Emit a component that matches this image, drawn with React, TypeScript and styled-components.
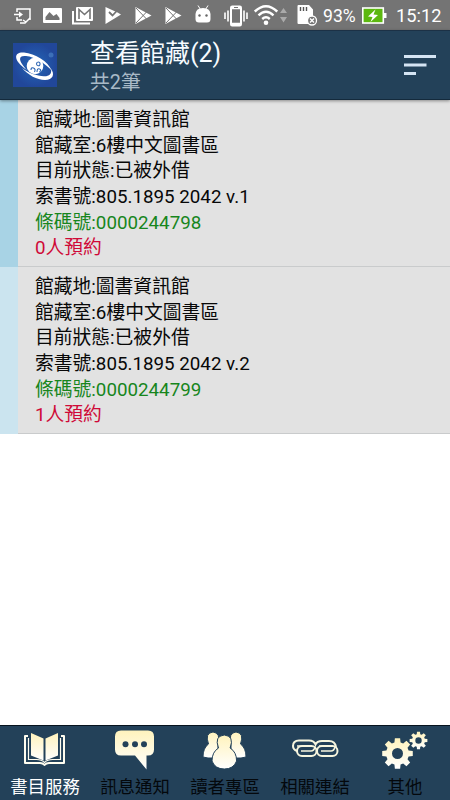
import React from "react";
import styled, { createGlobalStyle } from "styled-components";

const Global = createGlobalStyle`
  * { box-sizing: border-box; }
  body { margin: 0; background: #fff; font-family: Roboto, "Noto Sans CJK TC", sans-serif; }
  svg { display: block; flex: none; }
`;

const Screen = styled.div`
  width: 450px;
  height: 800px;
  display: flex;
  flex-direction: column;
  overflow: hidden;
  background: #fff;
`;

const StatusBar = styled.div`
  height: 30px;
  flex: none;
  display: flex;
  align-items: center;
  background: #747474;
  color: #fff;
  white-space: nowrap;
`;

const Glyph = styled.svg<{ $gap: number }>`
  margin-left: ${(p) => p.$gap}px;
  height: 30px;
`;

const StatusText = styled.span<{ $gap: number; $size: number; $width: number }>`
  margin-left: ${(p) => p.$gap}px;
  width: ${(p) => p.$width}px;
  font-size: ${(p) => p.$size}px;
  line-height: 30px;
  padding-top: 1px;
  height: 30px;
  font-weight: 400;
`;

const Header = styled.header`
  height: 70px;
  flex: none;
  display: flex;
  align-items: center;
  padding: 0 14px 0 13px;
  background: #234159;
  border-top: 1px solid #1c3146;
  border-bottom: 1px solid #142a3c;
  box-shadow: 0 1px 3px rgba(0, 0, 0, 0.4);
  z-index: 1;
`;

const Titles = styled.div`
  flex: 1;
  margin-left: 33px;
  padding-top: 5px;
`;

const Title = styled.h1`
  margin: 0;
  font-size: 25px;
  font-weight: 400;
  line-height: 31px;
  color: #f6fbff;
`;

const Subtitle = styled.div`
  font-size: 19.8px;
  line-height: 28px;
  color: #a9bac7;
`;

const List = styled.main`
  flex: 1;
`;

const Card = styled.article<{ $stripe: string }>`
  height: 167px;
  padding: 8px 0 0 17px;
  border-left: 18.5px solid ${(p) => p.$stripe};
  background: #e2e2e2;
  box-shadow: inset 0 -1px 0 #c9cbcc;
`;

const Line = styled.div<{ $color?: string }>`
  height: 25.7px;
  line-height: 25.7px;
  font-size: 18.78px;
  white-space: nowrap;
  color: ${(p) => p.$color ?? "#080808"};
`;

const TabBar = styled.nav`
  height: 75px;
  flex: none;
  display: grid;
  grid-template-columns: repeat(5, 1fr);
  background: #234159;
  border-top: 1px solid #07131e;
`;

const Tab = styled.div<{ $active?: boolean }>`
  display: flex;
  flex-direction: column;
  align-items: center;
  color: ${(p) => (p.$active ? "#fff" : "#04080c")};
  font-size: 17.4px;
  line-height: 24px;
  white-space: nowrap;
`;

const TabIcon = styled.svg`
  width: 90px;
  height: 49px;
`;

function PlayStore({ gap }: { gap: number }) {
  return (
    <Glyph $gap={gap} width="17" viewBox="0 0 17 30">
      <path d="M.5 7v17L16.5 15.5Z" fill="#fff" />
      <path d="M1 8l10.500 11M1 23l10.500-11" stroke="#747474" strokeWidth="1" />
    </Glyph>
  );
}

function StatusIcons() {
  return (
    <>
      <Glyph $gap={14} width="17" viewBox="0 0 17 30" fill="none" stroke="#fff" strokeWidth="1.500">
        <path d="M3 12V9h13v11M3 17v3h5M0 14.500h6" />
        <path d="M5 11.500l4 3-4 3Z" fill="#fff" stroke="none" />
        <path d="M6 23h5l5-5M9 20l3 2" />
      </Glyph>
      <Glyph $gap={12} width="19" viewBox="0 0 19 30">
        <rect y="8" width="19" height="15" rx="1" fill="#fff" />
        <path d="M2.500 20v-3l4-5 4 4 3-2 3 4v2Z" fill="#747474" />
      </Glyph>
      <Glyph $gap={10} width="21" viewBox="0 0 21 30" fill="none">
        <path d="M1 11v12.500h17" stroke="#fff" strokeWidth="2" />
        <rect x="4" y="7" width="17" height="14" rx="1" fill="#fff" />
        <path d="M7 19V9.500l5.500 5 5.500-5V19" stroke="#747474" strokeWidth="1.600" />
      </Glyph>
      <Glyph $gap={12} width="16" viewBox="0 0 16 30">
        <path d="M.5 7v17L16 14.500l-3.500-2Z" fill="#fff" />
        <path d="M4 12l3.500 3.500L14 8.500" fill="none" stroke="#747474" strokeWidth="1.800" />
      </Glyph>
      <PlayStore gap={14} />
      <PlayStore gap={13} />
      <Glyph $gap={13} width="16" viewBox="0 0 16 30">
        <path d="M3 5.500l2.500 4M13 5.500l-2.500 4" stroke="#fff" strokeWidth="1" />
        <path d="M.5 14Q1 8 8 8t7.500 6v5q0 3.500-3.500 3.500H4Q.5 22.500.5 19Z" fill="#fff" />
        <circle cx="4.500" cy="15.500" r="1.200" fill="#666" />
        <circle cx="11.500" cy="15.500" r="1.200" fill="#666" />
      </Glyph>
      <Glyph $gap={13} width="24" viewBox="0 0 24 30" fill="none" stroke="#fff">
        <rect x="7" y="6.500" width="10" height="19" rx="1.200" strokeWidth="2" />
        <path d="M7 8h10M7 24h10" strokeWidth="2.500" />
        <path d="M1 12.500v6.500M4 10.500v11M20 10.500v11M23 12.500v6.500" strokeWidth="1.600" />
        <path d="M10 7.500h4" stroke="#747474" />
      </Glyph>
      <Glyph $gap={6} width="24" viewBox="0 0 24 30" fill="none" stroke="#fff" strokeWidth="2.400">
        <path d="M.8 11.500Q12 1 23.200 11.500M4.500 15.300q7.500-7 15 0M8.200 19q3.800-3.400 7.600 0" />
        <circle cx="12" cy="22.800" r="2.300" fill="#fff" stroke="none" />
      </Glyph>
      <Glyph $gap={2} width="7" viewBox="0 0 7 30" fill="#aaa">
        <path d="M0 13l3.500-5L7 13ZM0 17h7l-3.500 5.500Z" />
      </Glyph>
      <Glyph $gap={10} width="21" viewBox="0 0 21 30">
        <path d="M.5 6Q.5 5 1.500 5H12l4 4.500V16q-5 1-5 5l1 3H1.500q-1 0-1-1Z" fill="#fff" />
        <path d="M3.500 7v4M6.500 7v4M9.500 7v4" stroke="#555" strokeWidth="1.400" />
        <circle cx="15" cy="20.500" r="4.500" fill="#747474" stroke="#fff" strokeWidth="1.300" />
        <path d="M13 18.500l4 4m0-4l-4 4" stroke="#fff" strokeWidth="1.400" />
      </Glyph>
      <StatusText $gap={5} $size={17.6} $width={34}>93%</StatusText>
      <Glyph $gap={5} width="25" viewBox="0 0 25 30">
        <rect x=".8" y="8" width="20.500" height="15" fill="#5cb810" stroke="#fff" strokeWidth="1.600" />
        <rect x="22" y="13" width="2.500" height="5" fill="#fff" />
        <path d="M13.500 9.500L6 16.500l4.500.5-2 5 7.500-7-4.500-.5Z" fill="#fff" />
      </Glyph>
      <StatusText $gap={9} $size={18.3} $width={46}>15:12</StatusText>
    </>
  );
}

function Logo() {
  return (
    <svg width="44" height="44" viewBox="0 0 44 44">
      <defs>
        <radialGradient id="logoFill">
          <stop offset="0" stopColor="#2467b8" />
          <stop offset="1" stopColor="#21479a" />
        </radialGradient>
      </defs>
      <rect width="44" height="44" fill="url(#logoFill)" />
      <circle cx="38" cy="12" r="2.500" fill="#3c6fb8" />
      <circle cx="22" cy="23" r="8.300" fill="#fff" />
      <path d="M14 27C-1 17 1 8.500 11 9.500C22 10.500 35 18 39 28C32 20 22 14 13 13C4 12 6 19 14 27Z" fill="#fff" />
      <path d="M9 25C15 32 24 37 32 37C40 37 42 31 38 26C39 31 36 33.500 31 33.300C24 33 15 30 9 25Z" fill="#fff" />
      <path d="M18 27q0-3 2.500-2t1 4M24 29q0-4 2.500-3t0 3M23.500 21q0-2 1.800-2t1.700 2-1.700 1.800-1.800-1.800" fill="none" stroke="#2862b2" strokeWidth="1.100" />
    </svg>
  );
}

function gear(cx: number, cy: number, outer: number, inner: number, hole: number) {
  const points: string[] = [];
  for (let i = 0; i < 8; i++) {
    const mid = (i * Math.PI) / 4;
    [[-0.27, inner], [-0.17, outer], [0.17, outer], [0.27, inner]].forEach(([da, r]) => {
      points.push(`${(cx + r * Math.cos(mid + da)).toFixed(2)} ${(cy + r * Math.sin(mid + da)).toFixed(2)}`);
    });
  }
  return `M${points.join("L")}ZM${cx - hole} ${cy}a${hole} ${hole} 0 1 0 ${hole * 2} 0a${hole} ${hole} 0 1 0 ${-hole * 2} 0Z`;
}

const cream = "url(#cream)";

const tabs = [
  {
    label: "書目服務",
    icon: (
      <>
        <path d="M28 10h-3v27h15q3 0 4.500 2 1.500-2 4.500-2h15V10h-3" fill="none" stroke="#fffdf0" strokeWidth="2" strokeLinejoin="round" />
        <path d="M28.500 12v21.500h8q5 0 8 3 3-3 8-3h8V12" fill="none" stroke="#fffdf0" strokeWidth="1.200" />
        <path d="M31 7l12.500 5.500V34.500L31 29.500ZM58 7L45.500 12.500V34.500L58 29.500Z" fill={cream} />
      </>
    ),
  },
  {
    label: "訊息通知",
    icon: (
      <>
        <path d="M31 4.500h27q6 0 6 6v13q0 6-6 6h-1.500v14L45 29.500H31q-6 0-6-6V10.500q0-6 6-6Z" fill={cream} />
        <g fill="#234159"><circle cx="35.500" cy="18.300" r="3" /><circle cx="45" cy="18.300" r="3" /><circle cx="54" cy="18.300" r="3" /></g>
      </>
    ),
  },
  {
    label: "讀者專區",
    icon: (
      <g fill={cream} stroke="#234159" strokeWidth="1">
        <path d="M28.500 18q-4-11 4.500-12 8 1 5 12v14H28l-5-1q0-9 5.500-13ZM60.500 18q4-11-4.500-12-8 1-5 12v14h10l5-1q0-9-5.500-13Z" />
        <path d="M38.500 22q-4.500-12 5.800-13 10.300 1 5.800 13 6.500 4 6.500 13-3 8-12.300 8T32 35q0-9 6.500-13Z" />
      </g>
    ),
  },
  {
    label: "相關連結",
    icon: (
      <g fill="none" stroke="#f7f6df" strokeWidth="2">
        <path d="M27 25q-4-1.500-4-5 0-5.500 6-5.500h10q5 0 6.500 4Q47 15 52 15h7q6 0 7 6" />
        <rect x="27" y="20" width="19.500" height="10" rx="5" />
        <rect x="47" y="20" width="20.500" height="10" rx="5" />
        <path d="M31 25h10q3 0 4-4M51 25h10q3 0 4-4" strokeWidth="1.500" />
        <path d="M27 20h13M49 20h12" strokeWidth="1.500" />
      </g>
    ),
  },
  {
    label: "其他",
    icon: (
      <g fill={cream} fillRule="evenodd">
        <path d={gear(37.5, 27.5, 15.5, 11.5, 5.5)} />
        <path d={gear(58.5, 14.5, 9, 6.5, 3.2)} />
      </g>
    ),
  },
];

const items = [
  { stripe: "#a8d3e5", call: "805.1895 2042 v.1", barcode: "0000244798", holds: 0 },
  { stripe: "#cbe4ef", call: "805.1895 2042 v.2", barcode: "0000244799", holds: 1 },
];

export default function App() {
  return (
    <Screen>
      <Global />
      <StatusBar><StatusIcons /></StatusBar>
      <Header>
        <Logo />
        <Titles>
          <Title>查看館藏(2)</Title>
          <Subtitle>共2筆</Subtitle>
        </Titles>
        <svg width="32" height="22" viewBox="0 0 32 22" fill="#d5e4f3">
          <path d="M0 1h32v3H0ZM0 9.500h22.500v3H0ZM0 18h12v3H0Z" />
        </svg>
      </Header>
      <List>
        {items.map((item) => (
          <Card key={item.barcode} $stripe={item.stripe}>
            <Line>館藏地:圖書資訊館</Line>
            <Line>館藏室:6樓中文圖書區</Line>
            <Line>目前狀態:已被外借</Line>
            <Line>索書號:{item.call}</Line>
            <Line $color="#17861d">條碼號:{item.barcode}</Line>
            <Line $color="#cf0a38">{item.holds}人預約</Line>
          </Card>
        ))}
      </List>
      <TabBar>
        {tabs.map((tab, i) => (
          <Tab key={tab.label} $active={i === 0}>
            <TabIcon viewBox="0 0 90 49">
              <defs>
                <linearGradient id="cream" x1="0" y1="0" x2="0" y2="1">
                  <stop offset="0" stopColor="#fff3bd" />
                  <stop offset="1" stopColor="#ffffff" />
                </linearGradient>
              </defs>
              {tab.icon}
            </TabIcon>
            {tab.label}
          </Tab>
        ))}
      </TabBar>
    </Screen>
  );
}
